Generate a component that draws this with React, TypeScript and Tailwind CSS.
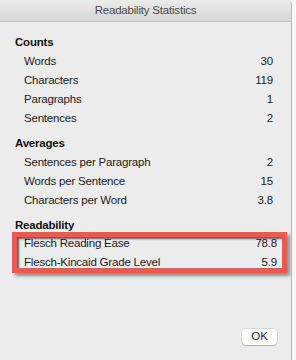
import React from "react"

type Row = { label: string; value: string }

const sections: { title: string; rows: Row[]; highlight?: boolean }[] = [
    {
        title: "Counts",
        rows: [
            { label: "Words", value: "30" },
            { label: "Characters", value: "119" },
            { label: "Paragraphs", value: "1" },
            { label: "Sentences", value: "2" },
        ],
    },
    {
        title: "Averages",
        rows: [
            { label: "Sentences per Paragraph", value: "2" },
            { label: "Words per Sentence", value: "15" },
            { label: "Characters per Word", value: "3.8" },
        ],
    },
    {
        title: "Readability",
        highlight: true,
        rows: [
            { label: "Flesch Reading Ease", value: "78.8" },
            { label: "Flesch-Kincaid Grade Level", value: "5.9" },
        ],
    },
]

function StatRow({ row }: { row: Row }) {
    return (
        <div className="flex h-[19px] items-center justify-between pl-[24px] pr-[18px] text-[11.5px] tracking-[-0.2px] text-[#1a1a1a]">
            <span>{row.label}</span>
            <span>{row.value}</span>
        </div>
    )
}

export default function App() {
    return (
        <div className="flex h-[360px] w-[296px] overflow-hidden bg-[#f4f4f4]" style={{ fontFamily: '"Liberation Sans", Arial, sans-serif' }}>
            <div className="flex w-[292px] shrink-0 flex-col rounded-tr-[5px] border-r border-[#b9b9b9] bg-[#ececec]">
                {/* title bar */}
                <div className="flex h-[22px] items-center justify-center rounded-tr-[5px] border-b border-[#c4c4c4] bg-gradient-to-b from-[#ebebeb] to-[#d5d5d5] text-[11.5px] tracking-[-0.2px] text-[#4a4a4a]">
                    Readability Statistics
                </div>

                <div className="flex flex-1 flex-col pt-[11px]">
                    {sections.map((s) => (
                        <div key={s.title} className="mb-[6px]">
                            <div className="flex h-[19px] items-center pl-[15px] text-[11.5px] font-bold tracking-[-0.2px] text-[#111]">{s.title}</div>
                            {s.highlight ? (
                                <div className="-mt-[3px] ml-[12px] mr-[4px] border-[5px] border-[#ea5a4e] shadow-[inset_2px_2px_2px_rgba(0,0,0,0.6),3px_3px_3px_rgba(0,0,0,0.4)]">
                                    <div className="-mt-[3px] -mb-[4px]">
                                        {s.rows.map((r) => (
                                            <div key={r.label} className="flex h-[19px] items-center justify-between pl-[7px] pr-[5px] text-[11.5px] tracking-[-0.2px] text-[#1a1a1a]">
                                                <span>{r.label}</span>
                                                <span>{r.value}</span>
                                            </div>
                                        ))}
                                    </div>
                                </div>
                            ) : (
                                s.rows.map((r) => <StatRow key={r.label} row={r} />)
                            )}
                        </div>
                    ))}

                    <div className="mt-auto mb-[15px] flex justify-end pr-[14px]">
                        <button className="h-[16px] w-[35px] rounded-[4px] bg-white text-[11.5px] leading-none text-[#1a1a1a] shadow-[0_0_0_0.5px_rgba(0,0,0,0.15),0_1px_1px_rgba(0,0,0,0.2)]">
                            OK
                        </button>
                    </div>
                </div>
            </div>
            <div className="flex-1 bg-[#f7f7f7]" />
        </div>
    )
}
